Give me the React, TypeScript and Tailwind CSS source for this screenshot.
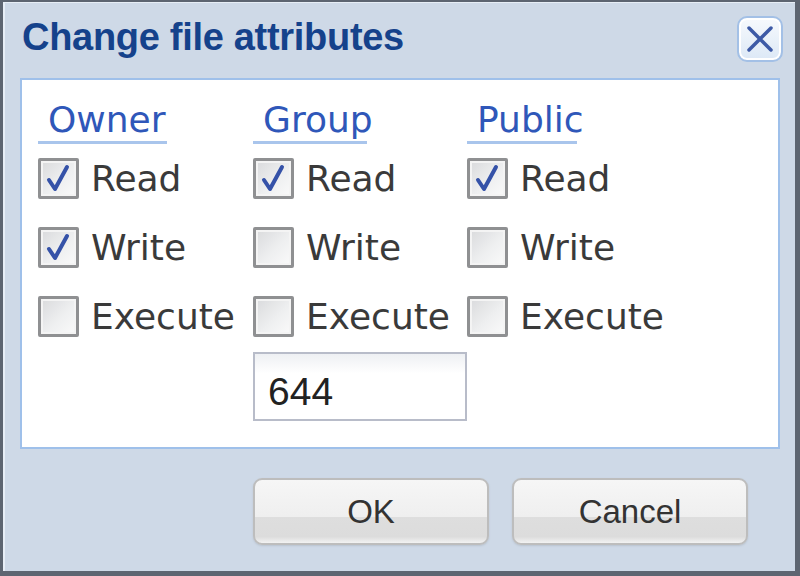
import React from 'react';

function CheckBox({ checked }: { checked: boolean }) {
  return (
    <div className="w-[41px] h-[41px] shrink-0 rounded-[2px] border-[3px] border-[#8f9092] bg-[linear-gradient(135deg,#d9dadc_0%,#eeeff0_55%,#fafafa_100%)] shadow-[inset_0_0_0_2px_#f4f4f4]">
      {checked && (
        <svg width="35" height="35" viewBox="0 0 35 35">
          <path d="M8 19 L14 28 L26 6" fill="none" stroke="#3552a8" strokeWidth="4" strokeLinecap="round" strokeLinejoin="round" />
        </svg>
      )}
    </div>
  );
}

function Row({ label, checked }: { label: string; checked: boolean }) {
  return (
    <div className="h-[69px] flex items-center gap-[12px]">
      <CheckBox checked={checked} />
      <span className="text-[36px] leading-none text-[#3a3a3a]" style={{ fontFamily: '"DejaVu Sans", sans-serif' }}>
        {label}
      </span>
    </div>
  );
}

function Column({ title, width, rows, children }: { title: string; width: string; rows: boolean[]; children?: React.ReactNode }) {
  return (
    <div className="flex flex-col">
      <div className={`${width} pl-[10px] pb-[3px] border-b-[3px] border-[#a9c5ec] text-[36px] leading-none text-[#2f57b9]`} style={{ fontFamily: '"DejaVu Sans", sans-serif' }}>
        {title}
      </div>
      <Row label="Read" checked={rows[0]} />
      <Row label="Write" checked={rows[1]} />
      <Row label="Execute" checked={rows[2]} />
      {children}
    </div>
  );
}

function Button({ label }: { label: string }) {
  return (
    <button className="w-[236px] h-[67px] rounded-[9px] border-2 border-[#bdbdbd] bg-[linear-gradient(#f6f6f6_0%,#efefef_58%,#dedede_58%,#dcdcdc_90%,#f2f2f2_100%)] shadow-[0_1px_2px_#b9c3cf] text-[33px] leading-none text-[#333]" style={{ fontFamily: '"Liberation Sans", Arial, sans-serif' }}>
      {label}
    </button>
  );
}

export default function App() {
  return (
    <div className="w-[800px] h-[576px] bg-[#5d6571] pt-[2px] pl-[3px] pr-[5px] pb-[5px]">
      <div className="w-full h-full bg-[#ced9e7] border-l-2 border-t border-[#e7eef6] flex flex-col">
        <div className="h-[75px] flex items-start">
          <div className="pl-[17px] pt-[15px] text-[38px] leading-none font-bold tracking-[-0.3px] text-[#15428b]" style={{ fontFamily: '"Liberation Sans", Arial, sans-serif' }}>
            Change file attributes
          </div>
          <button className="ml-auto mr-[12px] mt-[13px] w-[46px] h-[46px] rounded-[10px] border-2 border-[#a3c0e6] bg-[linear-gradient(#f7fafd,#dce8f6)] shadow-[inset_0_0_0_2px_#ffffff] flex items-center justify-center">
            <svg width="28" height="28" viewBox="0 0 28 28">
              <path d="M3 3 L25 25 M25 3 L3 25" stroke="#3d5aa6" strokeWidth="3.5" strokeLinecap="round" />
            </svg>
          </button>
        </div>
        <div className="ml-[15px] mr-[15px] h-[371px] bg-white border-2 border-[#9fc0ea] pt-[22px] pl-[16px]">
          <div className="grid grid-cols-[215px_214px_214px]">
            <Column title="Owner" width="w-[129px]" rows={[true, true, false]} />
            <Column title="Group" width="w-[114px]" rows={[true, false, false]}>
              <div className="mt-[1px] w-[214px] h-[69px] border-2 border-[#b8bcc9] bg-[linear-gradient(#eef0f3_0%,#ffffff_30%)] flex items-center pl-[13px] pt-[9px] text-[39px] leading-none text-[#222]" style={{ fontFamily: '"Liberation Sans", Arial, sans-serif' }}>
                644
              </div>
            </Column>
            <Column title="Public" width="w-[110px]" rows={[true, false, false]} />
          </div>
        </div>
        <div className="flex justify-end gap-[23px] pr-[47px] pt-[29px]">
          <Button label="OK" />
          <Button label="Cancel" />
        </div>
      </div>
    </div>
  );
}
